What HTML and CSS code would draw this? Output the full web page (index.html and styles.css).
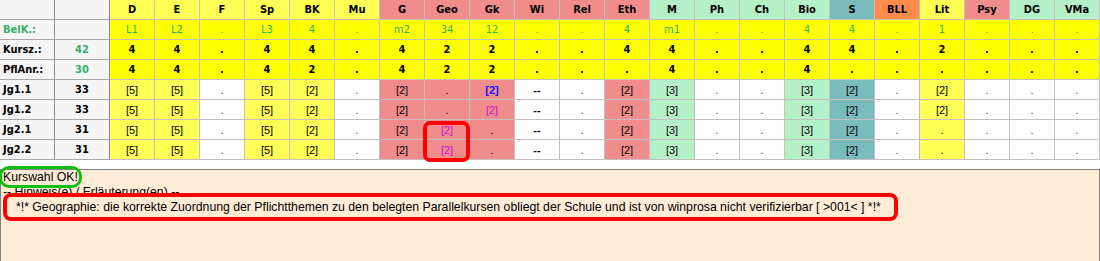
FILE: index.html
```html
<!DOCTYPE html>
<html>
<head>
<meta charset="utf-8">
<link rel="stylesheet" href="styles.css">
</head>
<body>
<div class="wrap">
  <div class="grid">
    <div class="c h"></div><div class="c h"></div>
    <div class="c y b">D</div><div class="c y b">E</div><div class="c y b">F</div><div class="c y b">Sp</div><div class="c y b">BK</div><div class="c y b">Mu</div>
    <div class="c r b">G</div><div class="c r b">Geo</div><div class="c r b">Gk</div><div class="c r b">Wi</div><div class="c r b">Rel</div><div class="c r b">Eth</div>
    <div class="c g b">M</div><div class="c g b">Ph</div><div class="c g b">Ch</div><div class="c g b">Bio</div><div class="c t b">S</div><div class="c o b">BLL</div>
    <div class="c y b">Lit</div><div class="c r b">Psy</div><div class="c g b">DG</div><div class="c g b">VMa</div>

    <div class="c h lbl b gt">BelK.:</div><div class="c h"></div>
    <div class="c Y gt">L1</div><div class="c Y gt">L2</div><div class="c Y gt">.</div><div class="c Y gt">L3</div><div class="c Y gt">4</div><div class="c Y gt">.</div>
    <div class="c Y gt">m2</div><div class="c Y gt">34</div><div class="c Y gt">12</div><div class="c Y gt">.</div><div class="c Y gt">.</div><div class="c Y gt">4</div>
    <div class="c Y gt">m1</div><div class="c Y gt">.</div><div class="c Y gt">.</div><div class="c Y gt">4</div><div class="c Y gt">4</div><div class="c Y gt">.</div>
    <div class="c Y gt">1</div><div class="c Y gt">.</div><div class="c Y gt">.</div><div class="c Y gt">.</div>

    <div class="c h lbl b">Kursz.:</div><div class="c h b gt">42</div>
    <div class="c Y b">4</div><div class="c Y b">4</div><div class="c Y b">.</div><div class="c Y b">4</div><div class="c Y b">4</div><div class="c Y b">.</div>
    <div class="c Y b">4</div><div class="c Y b">2</div><div class="c Y b">2</div><div class="c Y b">.</div><div class="c Y b">.</div><div class="c Y b">4</div>
    <div class="c Y b">4</div><div class="c Y b">.</div><div class="c Y b">.</div><div class="c Y b">4</div><div class="c Y b">4</div><div class="c Y b">.</div>
    <div class="c Y b">2</div><div class="c Y b">.</div><div class="c Y b">.</div><div class="c Y b">.</div>

    <div class="c h lbl b">PflAnr.:</div><div class="c h b gt">30</div>
    <div class="c Y b">4</div><div class="c Y b">4</div><div class="c Y b">.</div><div class="c Y b">4</div><div class="c Y b">2</div><div class="c Y b">.</div>
    <div class="c Y b">4</div><div class="c Y b">2</div><div class="c Y b">2</div><div class="c Y b">.</div><div class="c Y b">.</div><div class="c Y b">.</div>
    <div class="c Y b">4</div><div class="c Y b">.</div><div class="c Y b">.</div><div class="c Y b">4</div><div class="c Y b">.</div><div class="c Y b">.</div>
    <div class="c Y b">.</div><div class="c Y b">.</div><div class="c Y b">.</div><div class="c Y b">.</div>

    <div class="c h lbl b">Jg1.1</div><div class="c h b">33</div>
    <div class="c y v">[5]</div><div class="c y v">[5]</div><div class="c w v d">.</div><div class="c y v">[5]</div><div class="c y v">[2]</div><div class="c w v d">.</div>
    <div class="c r v">[2]</div><div class="c r v">.</div><div class="c r v blue">[2]</div><div class="c w v dash">--</div><div class="c w v d">.</div><div class="c r v">[2]</div>
    <div class="c g v">[3]</div><div class="c w v d">.</div><div class="c w v d">.</div><div class="c g v">[3]</div><div class="c t v">[2]</div><div class="c w v d">.</div>
    <div class="c y v">[2]</div><div class="c w v d">.</div><div class="c w v d">.</div><div class="c w v d">.</div>

    <div class="c h lbl b">Jg1.2</div><div class="c h b">33</div>
    <div class="c y v">[5]</div><div class="c y v">[5]</div><div class="c w v d">.</div><div class="c y v">[5]</div><div class="c y v">[2]</div><div class="c w v d">.</div>
    <div class="c r v">[2]</div><div class="c r v">.</div><div class="c r v mag">[2]</div><div class="c w v dash">--</div><div class="c w v d">.</div><div class="c r v">[2]</div>
    <div class="c g v">[3]</div><div class="c w v d">.</div><div class="c w v d">.</div><div class="c g v">[3]</div><div class="c t v">[2]</div><div class="c w v d">.</div>
    <div class="c y v">[2]</div><div class="c w v d">.</div><div class="c w v d">.</div><div class="c w v d">.</div>

    <div class="c h lbl b">Jg2.1</div><div class="c h b">31</div>
    <div class="c y v">[5]</div><div class="c y v">[5]</div><div class="c w v d">.</div><div class="c y v">[5]</div><div class="c y v">[2]</div><div class="c w v d">.</div>
    <div class="c r v">[2]</div><div class="c r v mag">[2]</div><div class="c r v">.</div><div class="c w v dash">--</div><div class="c w v d">.</div><div class="c r v">[2]</div>
    <div class="c g v">[3]</div><div class="c w v d">.</div><div class="c w v d">.</div><div class="c g v">[3]</div><div class="c t v">[2]</div><div class="c w v d">.</div>
    <div class="c y v">.</div><div class="c w v d">.</div><div class="c w v d">.</div><div class="c w v d">.</div>

    <div class="c h lbl b">Jg2.2</div><div class="c h b">31</div>
    <div class="c y v">[5]</div><div class="c y v">[5]</div><div class="c w v d">.</div><div class="c y v">[5]</div><div class="c y v">[2]</div><div class="c w v d">.</div>
    <div class="c r v">[2]</div><div class="c r v mag">[2]</div><div class="c r v">.</div><div class="c w v dash">--</div><div class="c w v d">.</div><div class="c r v">[2]</div>
    <div class="c g v">[3]</div><div class="c w v d">.</div><div class="c w v d">.</div><div class="c g v">[3]</div><div class="c t v">[2]</div><div class="c w v d">.</div>
    <div class="c y v">.</div><div class="c w v d">.</div><div class="c w v d">.</div><div class="c w v d">.</div>
  </div>
  <div class="mark"></div>
</div>
<div class="panel">
  <div class="line"><span class="ok">Kurswahl OK!</span></div>
  <div class="line">-- Hinweis(e) / Erläuterung(en) --</div>
  <div class="msg">*!* Geographie: die korrekte Zuordnung der Pflichtthemen zu den belegten Parallelkursen obliegt der Schule und ist von winprosa nicht verifizierbar [ &gt;001&lt; ] *!*</div>
</div>
</body>
</html>
```
FILE: styles.css
```css
html, body {
  margin: 0;
  padding: 0;
  background: #ffffff;
}
body {
  font-family: "DejaVu Sans Condensed", "DejaVu Sans", sans-serif;
  font-stretch: condensed;
  font-size: 11px;
  color: #000;
  width: 1100px;
  height: 261px;
  overflow: hidden;
}
.wrap {
  position: relative;
}
.grid {
  display: grid;
  grid-template-columns: 55px 55px repeat(22, 45px);
  grid-auto-rows: 20px;
}
.c {
  box-sizing: border-box;
  border-right: 1px solid #c4c0c0;
  border-bottom: 1px solid #c4c0c0;
  display: flex;
  align-items: center;
  justify-content: center;
  white-space: nowrap;
  overflow: hidden;
}
.h {
  background: #f5f5f5;
  border-right-color: #8a8a8a;
  border-bottom-color: #a8a8a8;
}
.lbl {
  justify-content: flex-start;
  padding-left: 3px;
}
.b { font-weight: bold; }
.gt { color: #33b06a; }
.y { background: #ffff55; }
.Y { background: #ffff00; }
.r { background: #f08c8c; }
.g { background: #b4f0c8; }
.t { background: #7abcbc; }
.o { background: #ff8c48; }
.w { background: #ffffff; }
.v {
  font-family: "Liberation Sans", Arial, sans-serif;
  font-stretch: normal;
  font-size: 11px;
}
.d { color: #503070; }
.dash { font-weight: bold; }
.blue { color: #1010ff; font-weight: bold; }
.mag { color: #cc10cc; }
.mark {
  position: absolute;
  left: 423px;
  top: 121px;
  width: 47px;
  height: 41px;
  box-sizing: border-box;
  border: 4px solid #ff0000;
  border-radius: 7px;
}
.panel {
  margin-top: 9px;
  box-sizing: border-box;
  width: 1100px;
  height: 92px;
  border: 1px solid #808080;
  border-bottom: none;
  background: #ffecd6;
  font-family: "Liberation Sans", Arial, sans-serif;
  font-size: 12.25px;
  padding-left: 2px;
}
.line {
  height: 15px;
  line-height: 15px;
  white-space: nowrap;
}
.ok {
  outline: 3px solid #10c010;
  outline-offset: 1px;
  border-radius: 6px;
}
.msg {
  position: relative;
  margin-top: -7px;
  box-sizing: border-box;
  width: 895px;
  height: 28px;
  line-height: 20px;
  border: 4px solid #ff0000;
  border-radius: 8px;
  background: #ffecd6;
  padding-left: 9px;
  white-space: nowrap;
}
```
